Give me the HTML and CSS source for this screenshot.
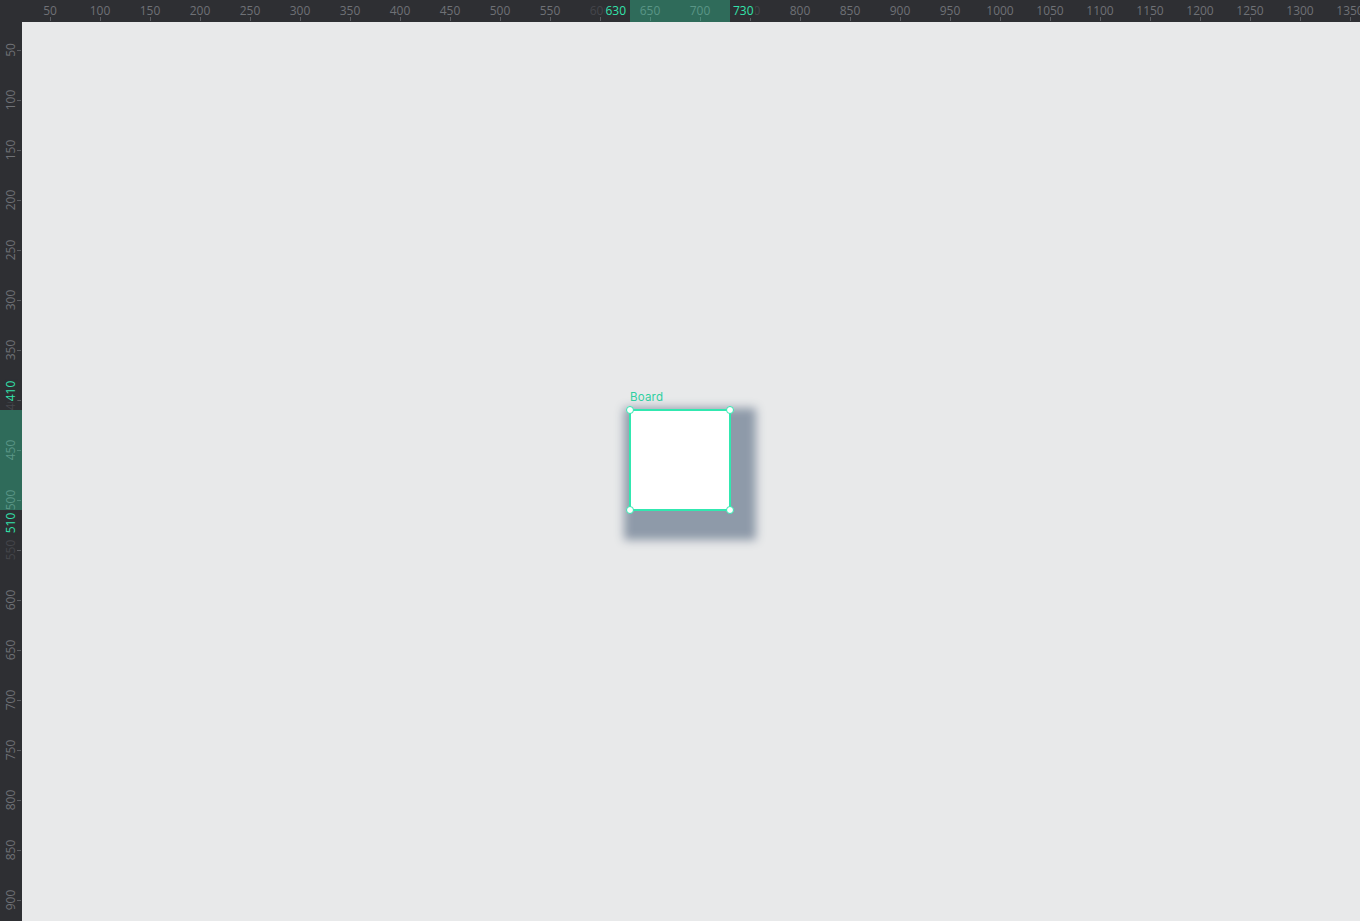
FILE: index.html
```html
<!DOCTYPE html>
<html>
<head>
<meta charset="utf-8">
<link rel="stylesheet" href="styles.css">
</head>
<body>
<div class="app">
  <div class="ruler-top">
    <div class="cell"><span>50</span></div>
    <div class="cell"><span>100</span></div>
    <div class="cell"><span>150</span></div>
    <div class="cell"><span>200</span></div>
    <div class="cell"><span>250</span></div>
    <div class="cell"><span>300</span></div>
    <div class="cell"><span>350</span></div>
    <div class="cell"><span>400</span></div>
    <div class="cell"><span>450</span></div>
    <div class="cell"><span>500</span></div>
    <div class="cell"><span>550</span></div>
    <div class="cell dim"><span>600</span></div>
    <div class="cell"><span>650</span></div>
    <div class="cell"><span>700</span></div>
    <div class="cell dim"><span>750</span></div>
    <div class="cell"><span>800</span></div>
    <div class="cell"><span>850</span></div>
    <div class="cell"><span>900</span></div>
    <div class="cell"><span>950</span></div>
    <div class="cell"><span>1000</span></div>
    <div class="cell"><span>1050</span></div>
    <div class="cell"><span>1100</span></div>
    <div class="cell"><span>1150</span></div>
    <div class="cell"><span>1200</span></div>
    <div class="cell"><span>1250</span></div>
    <div class="cell"><span>1300</span></div>
    <div class="cell"><span>1350</span></div>
    <div class="band band-top"></div>
    <span class="hl hl-top-start">630</span>
    <span class="hl hl-top-end">730</span>
  </div>
  <div class="ruler-left">
    <div class="cell"><span>50</span></div>
    <div class="cell"><span>100</span></div>
    <div class="cell"><span>150</span></div>
    <div class="cell"><span>200</span></div>
    <div class="cell"><span>250</span></div>
    <div class="cell"><span>300</span></div>
    <div class="cell"><span>350</span></div>
    <div class="cell dim"><span>400</span></div>
    <div class="cell"><span>450</span></div>
    <div class="cell"><span>500</span></div>
    <div class="cell dim"><span>550</span></div>
    <div class="cell"><span>600</span></div>
    <div class="cell"><span>650</span></div>
    <div class="cell"><span>700</span></div>
    <div class="cell"><span>750</span></div>
    <div class="cell"><span>800</span></div>
    <div class="cell"><span>850</span></div>
    <div class="cell"><span>900</span></div>
    <div class="band band-left"></div>
    <div class="hl-left hl-left-start"><span>410</span></div>
    <div class="hl-left hl-left-end"><span>510</span></div>
  </div>
  <div class="canvas">
    <div class="board-title">Board</div>
    <div class="board"></div>
    <div class="selection">
      <i class="handle h-tl"></i>
      <i class="handle h-tr"></i>
      <i class="handle h-bl"></i>
      <i class="handle h-br"></i>
    </div>
  </div>
</div>
</body>
</html>
```

FILE: styles.css
```css
html, body {
  margin: 0;
  padding: 0;
  overflow: hidden;
  background: #e8e9ea;
}

.app {
  width: 1360px;
  height: 921px;
  display: grid;
  grid-template-columns: 22px 1fr;
  grid-template-rows: 22px 1fr;
  font-family: "Open Sans", "Liberation Sans", sans-serif;
}

/* ---------- top ruler ---------- */
.ruler-top {
  grid-column: 1 / -1;
  position: relative;
  display: flex;
  padding-left: 25px;
  background: #2e2f33;
  overflow: hidden;
}

.ruler-top .cell {
  flex: none;
  width: 50px;
  height: 22px;
  position: relative;
  display: flex;
  justify-content: center;
}

.ruler-top .cell span {
  margin-top: 4px;
  font-size: 12px;
  line-height: 14px;
  color: #6f7176;
  white-space: nowrap;
}

.ruler-top .cell::after {
  content: "";
  position: absolute;
  left: 25px;
  top: 17px;
  width: 1px;
  height: 4px;
  background: #5b5d62;
}

.cell.dim span {
  color: #45464b;
}

.band {
  position: absolute;
  background: rgba(49, 224, 168, 0.34);
}

.band-top {
  left: 630px;
  top: 0;
  width: 100px;
  height: 22px;
}

.hl {
  position: absolute;
  top: 4px;
  font-size: 12px;
  line-height: 14px;
  color: #33e2ab;
  background: #2e2f33;
}

.hl-top-start {
  left: 626px;
  transform: translateX(-100%);
  padding-left: 1px;
}

.hl-top-end {
  left: 733px;
  padding-right: 1px;
}

/* ---------- left ruler ---------- */
.ruler-left {
  position: relative;
  display: flex;
  flex-direction: column;
  padding-top: 3px;
  background: #2e2f33;
  overflow: hidden;
}

.ruler-left .cell {
  flex: none;
  height: 50px;
  width: 22px;
  position: relative;
  display: flex;
  align-items: center;
  justify-content: center;
}

.ruler-left .cell span,
.hl-left span {
  display: block;
  font-size: 12px;
  line-height: 12px;
  color: #6f7176;
  white-space: nowrap;
  transform: rotate(-90deg);
}

.ruler-left .cell.dim span {
  color: #45464b;
}

.ruler-left .cell::after {
  content: "";
  position: absolute;
  left: 17px;
  top: 25px;
  width: 4px;
  height: 1px;
  background: #5b5d62;
}

.band-left {
  left: 0;
  top: 388px;
  width: 22px;
  height: 100px;
}

.hl-left {
  position: absolute;
  left: 0;
  width: 22px;
  height: 22px;
  display: flex;
  align-items: center;
  justify-content: center;
}

.hl-left span {
  color: #33e2ab;
  background: #2e2f33;
  padding: 0 1px;
}

.hl-left-start {
  top: 358px;
}

.hl-left-end {
  top: 490px;
}

/* ---------- canvas ---------- */
.canvas {
  position: relative;
  background: #e8e9ea;
  overflow: hidden;
}

.board-title {
  position: absolute;
  left: 608px;
  top: 369px;
  font-family: "Inter", "Open Sans", sans-serif;
  font-size: 11.5px;
  line-height: 13px;
  letter-spacing: 0.2px;
  color: #2fd0a0;
}

.board {
  position: absolute;
  left: 608px;
  top: 388px;
  width: 100px;
  height: 100px;
  background: #ffffff;
  box-shadow: 10px 14px 9px 16px #8e9aa9;
}

.selection {
  position: absolute;
  left: 607px;
  top: 387px;
  width: 98px;
  height: 98px;
  border: 2px solid #31e8b0;
}

.handle {
  position: absolute;
  width: 6px;
  height: 6px;
  border-radius: 50%;
  background: #ffffff;
  border: 1px solid #31e8b0;
}

.h-tl { left: -5px; top: -5px; }
.h-tr { right: -5px; top: -5px; }
.h-bl { left: -5px; bottom: -5px; }
.h-br { right: -5px; bottom: -5px; }
```
